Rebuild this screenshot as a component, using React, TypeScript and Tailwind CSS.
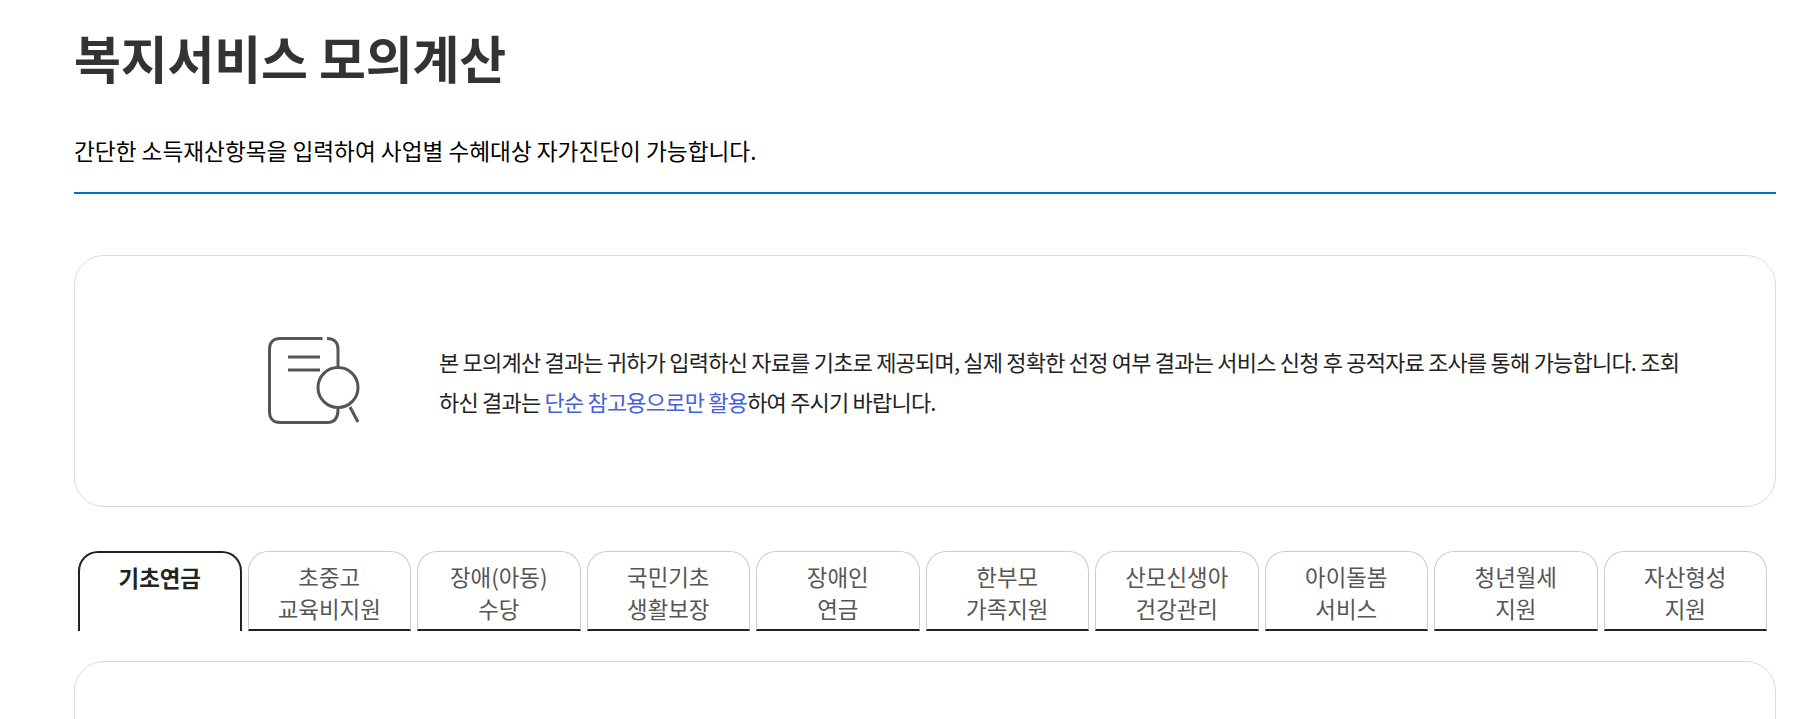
const font = { fontFamily: '"Noto Sans CJK KR", sans-serif' }

const tabs = [
  ['초중고', '교육비지원'],
  ['장애(아동)', '수당'],
  ['국민기초', '생활보장'],
  ['장애인', '연금'],
  ['한부모', '가족지원'],
  ['산모신생아', '건강관리'],
  ['아이돌봄', '서비스'],
  ['청년월세', '지원'],
  ['자산형성', '지원'],
]

function DocSearchIcon() {
  return (
    <svg width="92" height="88" viewBox="0 0 92 88" fill="none" stroke="#555555" strokeWidth="3" className="shrink-0">
      <path d="M54.5 1.5H12C5.5 1.5 1.5 5.5 1.5 12V75C1.5 81.5 5.5 85.5 12 85.5H59.500C66 85.5 70 81.500 70 72" />
      <path d="M59 1.500C66 1.500 70 5.500 70 12V30" />
      <path d="M20 20H52M20 33H52" />
      <circle cx="70" cy="50.500" r="20" />
      <path d="M82 70L90 85" />
    </svg>
  )
}

export default function App() {
  return (
    <div style={font} className="h-[719px] overflow-hidden bg-white pl-[74px] pr-[35px]">
      <h1 className="h-[134px] pt-[22px] text-[51px] leading-[70px] font-bold tracking-[-0.2px] text-[#333333]">
        복지서비스 모의계산
      </h1>
      <p className="pt-[1px] text-[22.650px] leading-[31px] text-black">
        간단한 소득재산항목을 입력하여 사업별 수혜대상 자가진단이 가능합니다.
      </p>
      <div className="mt-[26px] h-[2px] bg-[#0072ce]" />

      <div className="mt-[61px] flex h-[252px] items-center rounded-[30px] border border-[#dddddd] pl-[193px] pr-[90px]">
        <DocSearchIcon />
        <p className="-mt-[1px] ml-[79px] text-[22px] leading-[40px] tracking-[-0.8px] break-all text-[#222222]">
          본 모의계산 결과는 귀하가 입력하신 자료를 기초로 제공되며, 실제 정확한 선정 여부 결과는 서비스 신청 후 공적자료 조사를 통해 가능합니다. 조회하신 결과는{' '}
          <span className="text-[#4560d8]">단순 참고용으로만 활용</span>하여 주시기 바랍니다.
        </p>
      </div>

      <div className="mt-[44px] grid grid-cols-10 gap-[6px] pl-[4px] pr-[9px]">
        <div className="h-[80px] rounded-t-[20px] border-2 border-b-0 border-[#222222] pt-[8px] text-center text-[22.400px] leading-[32px] font-bold text-[#222222]">
          기초연금
        </div>
        {tabs.map((t) => (
          <div
            key={t[0]}
            className="h-[80px] rounded-t-[20px] border border-b-2 border-[#cccccc] border-b-[#222222] pt-[8px] text-center text-[22.400px] leading-[32px] text-[#555555]"
          >
            {t[0]}
            <br />
            {t[1]}
          </div>
        ))}
      </div>

      <div className="mt-[30px] h-[200px] rounded-[30px] border border-[#dddddd]" />
    </div>
  )
}
